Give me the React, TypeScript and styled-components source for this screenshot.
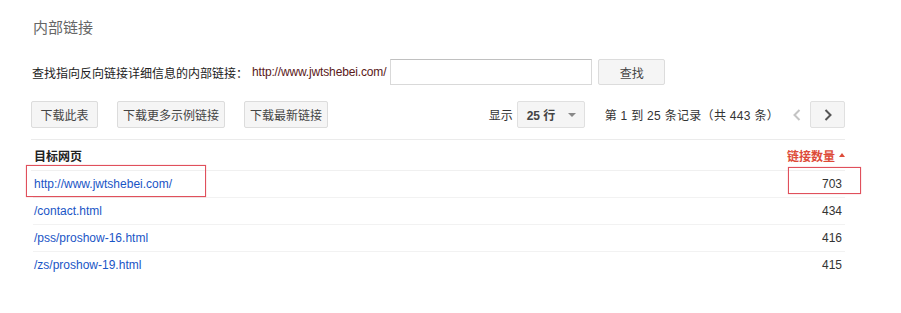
import styled, { createGlobalStyle } from "styled-components";

const GlobalStyle = createGlobalStyle`
  body {
    margin: 0;
    background: #fff;
    font-family: "Liberation Sans", "Noto Sans CJK SC", sans-serif;
    font-size: 12px;
    color: #222;
  }
`;

const rows = [
  { url: "http://www.jwtshebei.com/", count: 703 },
  { url: "/contact.html", count: 434 },
  { url: "/pss/proshow-16.html", count: 416 },
  { url: "/zs/proshow-19.html", count: 415 },
];

const Page = styled.div`
  padding: 19px 0 0 31px;
  width: 814px;
`;

const Title = styled.h2`
  margin: 0 0 0 2px;
  font-size: 15px;
  line-height: 18px;
  font-weight: normal;
  color: #666;
`;

const SearchRow = styled.div`
  margin-top: 22px;
  display: flex;
  align-items: center;
  height: 26px;
  padding-left: 1px;
`;

const Label = styled.span`
  color: #222;
  margin-right: 4px;
`;

const SiteUrl = styled.span`
  color: #5a1818;
  margin-right: 4px;
  letter-spacing: -0.15px;
`;

const Input = styled.div`
  width: 200px;
  height: 24px;
  border: 1px solid #d9d9d9;
  border-top-color: #c0c0c0;
  background: #fff;
  margin-right: 6px;
`;

const Button = styled.div<{ $active?: boolean }>`
  box-sizing: border-box;
  min-width: 67px;
  height: ${(p) => (p.$active ? "26px" : "27px")};
  padding: 0 5px;
  display: flex;
  align-items: center;
  justify-content: center;
  background: #f5f5f5;
  border: 1px solid #dcdcdc;
  border-radius: 2px;
  color: #444;
  white-space: nowrap;
`;

const Toolbar = styled.div`
  margin-top: 16px;
  display: flex;
  justify-content: space-between;
  align-items: center;
  height: 27px;
`;

const Group = styled.div<{ $gap: number }>`
  display: flex;
  align-items: center;
  gap: ${(p) => p.$gap}px;
`;

const Muted = styled.span`
  color: #333;
`;

const Select = styled.div`
  box-sizing: border-box;
  width: 68px;
  height: 27px;
  margin-left: 4px;
  padding: 0 8px 0 9px;
  display: flex;
  align-items: center;
  justify-content: space-between;
  background: #f5f5f5;
  border: 1px solid #e0e0e0;
  border-radius: 2px;
  font-weight: bold;
  color: #444;
`;

const Caret = styled.span`
  width: 0;
  height: 0;
  border-left: 4px solid transparent;
  border-right: 4px solid transparent;
  border-top: 4px solid #888;
`;

const Paging = styled.span`
  margin-left: 20px;
  margin-right: 4px;
  color: #333;
  letter-spacing: 0.3px;
`;

const NavBtn = styled.div<{ $on?: boolean }>`
  box-sizing: border-box;
  width: ${(p) => (p.$on ? "35px" : "27px")};
  height: 27px;
  display: flex;
  align-items: center;
  justify-content: center;
  background: ${(p) => (p.$on ? "#f5f5f5" : "#fff")};
  border: 1px solid ${(p) => (p.$on ? "#e0e0e0" : "transparent")};
  border-radius: 2px;
`;

const Divider = styled.div`
  margin-top: 11px;
  height: 1px;
  background: #ebebeb;
`;

const Table = styled.div`
  position: relative;
`;

const HeadRow = styled.div`
  display: flex;
  justify-content: space-between;
  align-items: center;
  height: 30px;
  border-bottom: 1px solid #f0f0f0;
  padding-left: 3px;
  font-weight: bold;
  color: #222;
`;

const SortHead = styled.span`
  color: #dd4b39;
  display: flex;
  align-items: center;
  gap: 4px;
`;

const SortArrow = styled.span`
  width: 0;
  height: 0;
  border-left: 3px solid transparent;
  border-right: 3px solid transparent;
  border-bottom: 4px solid #dd4b39;
`;

const Row = styled.div<{ $last?: boolean }>`
  display: flex;
  justify-content: space-between;
  align-items: center;
  height: 26px;
  border-bottom: 1px solid ${(p) => (p.$last ? "transparent" : "#f2f2f2")};
  margin-left: 2px;
  padding-left: 1px;
  padding-right: 3px;
`;

const Link = styled.a`
  color: #1a55c6;
  text-decoration: none;
`;

const Count = styled.span`
  color: #333;
`;

const Mark = styled.div<{ $l: number; $t: number; $w: number; $h: number }>`
  position: absolute;
  left: ${(p) => p.$l}px;
  top: ${(p) => p.$t}px;
  width: ${(p) => p.$w}px;
  height: ${(p) => p.$h}px;
  box-sizing: border-box;
  border: 1px solid #e0505c;
  box-shadow: 0 0 1px rgba(224, 80, 92, 0.6);
`;

const Chevron = ({ dir, color }: { dir: "l" | "r"; color: string }) => (
  <svg width="8" height="12" viewBox="0 0 8 12">
    <polyline
      points={dir === "l" ? "6.5,1 1.5,6 6.5,11" : "1.5,1 6.5,6 1.5,11"}
      fill="none"
      stroke={color}
      strokeWidth="2"
    />
  </svg>
);

export default function App() {
  return (
    <>
      <GlobalStyle />
      <Page>
        <Title>内部链接</Title>

        <SearchRow>
          <Label>查找指向反向链接详细信息的内部链接：</Label>
          <SiteUrl>http://www.jwtshebei.com/</SiteUrl>
          <Input />
          <Button $active>查找</Button>
        </SearchRow>

        <Toolbar>
          <Group $gap={19}>
            <Button>下载此表</Button>
            <Button>下载更多示例链接</Button>
            <Button>下载最新链接</Button>
          </Group>
          <Group $gap={0}>
            <Muted>显示</Muted>
            <Select>
              25 行<Caret />
            </Select>
            <Paging>第 1 到 25 条记录（共 443 条）</Paging>
            <NavBtn>
              <Chevron dir="l" color="#c4c4c4" />
            </NavBtn>
            <NavBtn $on>
              <Chevron dir="r" color="#555" />
            </NavBtn>
          </Group>
        </Toolbar>

        <Divider />

        <Table>
          <HeadRow>
            <span>目标网页</span>
            <SortHead>
              链接数量
              <SortArrow />
            </SortHead>
          </HeadRow>
          {rows.map((r, i) => (
            <Row key={r.url} $last={i === rows.length - 1}>
              <Link href="#">{r.url}</Link>
              <Count>{r.count}</Count>
            </Row>
          ))}
          <Mark $l={-5} $t={25} $w={180} $h={32} />
          <Mark $l={757} $t={27} $w={73} $h={27} />
        </Table>
      </Page>
    </>
  );
}
